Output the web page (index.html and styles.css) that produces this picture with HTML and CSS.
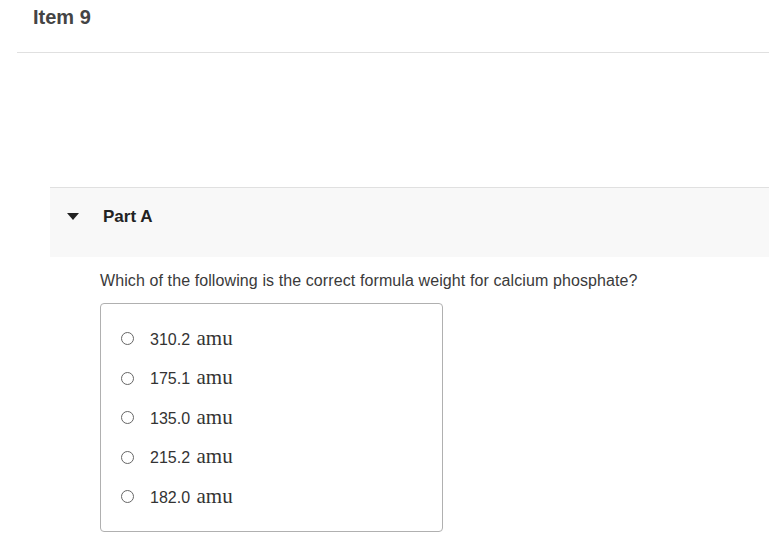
FILE: index.html
```html
<!DOCTYPE html>
<html lang="en">
  <head>
    <meta charset="UTF-8" />
    <title>Item 9</title>
    <link rel="stylesheet" href="styles.css">
  </head>
  <body>
    <div class="item-header">
      <h2>Item 9</h2>
    </div>
    <div class="part">
      <div class="part-head">
        <span class="caret"></span>
        <h3>Part A</h3>
      </div>
      <div class="part-body">
        <p class="question">Which of the following is the correct formula weight for calcium phosphate?</p>
        <div class="choices">
          <label class="choice"><span class="radio"></span><span class="text"><span class="num">310.2</span> <span class="unit">amu</span></span></label>
          <label class="choice"><span class="radio"></span><span class="text"><span class="num">175.1</span> <span class="unit">amu</span></span></label>
          <label class="choice"><span class="radio"></span><span class="text"><span class="num">135.0</span> <span class="unit">amu</span></span></label>
          <label class="choice"><span class="radio"></span><span class="text"><span class="num">215.2</span> <span class="unit">amu</span></span></label>
          <label class="choice"><span class="radio"></span><span class="text"><span class="num">182.0</span> <span class="unit">amu</span></span></label>
        </div>
      </div>
    </div>
  </body>
</html>
```

FILE: styles.css
```css
body {
  margin: 0;
  font-family: "Liberation Sans", Arial, sans-serif;
  color: #333;
  background-color: #fff;
}

.item-header {
  margin-left: 17px;
  padding: 5px 16px 0;
  height: 47px;
  border-bottom: 1px solid #e0e0e0;
}

.item-header h2 {
  margin: 0;
  font-size: 20px;
  line-height: 24px;
  color: #444;
}

.part {
  margin-top: 134px;
  margin-left: 50px;
}

.part-head {
  display: flex;
  align-items: center;
  height: 57px;
  padding-bottom: 12px;
  background-color: #f8f8f8;
  border-top: 1px solid #e0e0e0;
}

.caret {
  width: 0;
  height: 0;
  margin-left: 17px;
  margin-right: 24px;
  border-left: 6px solid transparent;
  border-right: 6px solid transparent;
  border-top: 7px solid #222;
}

.part-head h3 {
  margin: 0;
  font-size: 17px;
  color: #222;
}

.part-body {
  padding-left: 50px;
}

.question {
  margin: 14px 0 12px;
  font-size: 16px;
  line-height: 20px;
  letter-spacing: 0.1px;
  color: #3a3a3a;
}

.choices {
  width: 321px;
  padding: 15px 0 14px 20px;
  border: 1px solid #b0b0b0;
  border-radius: 4px;
}

.choice {
  display: flex;
  align-items: center;
  height: 39.5px;
}

.radio {
  flex: none;
  width: 11px;
  height: 11px;
  margin-right: 16px;
  border: 1px solid #666;
  border-radius: 50%;
}

.text {
  font-size: 16px;
  line-height: 20px;
}

.num {
  margin-right: 2px;
}

.unit {
  font-family: "Liberation Serif", "Times New Roman", serif;
  font-size: 21px;
}
```
